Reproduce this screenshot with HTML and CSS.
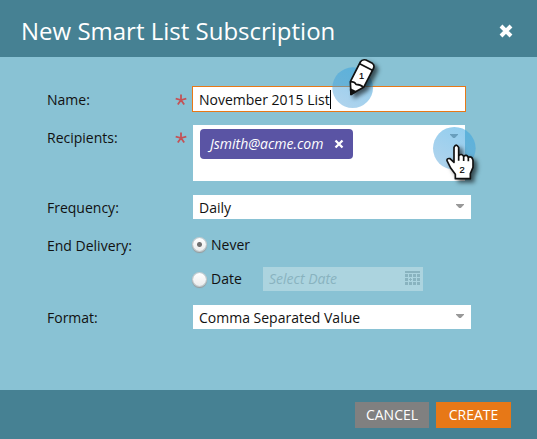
FILE: index.html
```html
<!DOCTYPE html>
<html lang="en">
<head>
<meta charset="utf-8">
<title>New Smart List Subscription</title>
<link rel="stylesheet" href="styles.css">
</head>
<body>
<main class="dialog">
  <header class="header">
    <h1>New Smart List Subscription</h1>
    <svg class="close" viewBox="0 0 14 14"><path d="M2 2 12 12M12 2 2 12"/></svg>
  </header>
  <form class="form">
    <div class="row name">
      <label>Name:</label><svg class="star" viewBox="0 0 12 12"><path d="M6 6V.5M6 6 .7 4.6M6 6l5.3-1.4M6 6 2.8 10.6M6 6l3.2 4.6"/></svg>
      <div class="field text"><span>November 2015 List</span><i class="caret"></i></div>
    </div>
    <div class="row recipients">
      <label>Recipients:</label><svg class="star" viewBox="0 0 12 12"><path d="M6 6V.5M6 6 .7 4.6M6 6l5.3-1.4M6 6 2.8 10.6M6 6l3.2 4.6"/></svg>
      <div class="field multi"><div class="tag"><em>Jsmith@acme.com</em><svg viewBox="0 0 8 8"><path d="m.5 .5 7 7M7.5 .5 .5 7.5"/></svg></div><i class="arrow"></i></div>
    </div>
    <div class="row frequency">
      <label>Frequency:</label><span></span>
      <div class="field select"><span>Daily</span><i class="arrow"></i></div>
    </div>
    <div class="row delivery">
      <label>End Delivery:</label><span></span>
      <div class="options">
        <div class="option never"><i class="radio on"></i><span>Never</span></div>
        <div class="option"><i class="radio"></i><span>Date</span>
          <div class="date"><em>Select Date</em>
            <svg viewBox="0 0 15 14"><path d="M0 0h15v2H0zM0 3h3v3H0zm4 0h3v3H4zm4 0h3v3H8zm4 0h3v3h-3zM0 7h3v3H0zm5 0h1v1h1v1H6v1H5V9H4V8h1zm3 0h3v3H8zm4 0h3v3h-3zM0 11h3v3H0zm4 0h3v3H4zm4 0h3v3H8zm4 0h3v3h-3z"/></svg>
          </div>
        </div>
      </div>
    </div>
    <div class="row format">
      <label>Format:</label><span></span>
      <div class="field select"><span>Comma Separated Value</span><i class="arrow"></i></div>
    </div>
  </form>
  <footer class="footer">
    <button class="cancel">CANCEL</button>
    <button class="create">CREATE</button>
  </footer>
  <svg class="steps" viewBox="0 0 510 420">
    <defs>
      <linearGradient id="spot" x1=".8" y1="0" x2=".3" y2=".9"><stop offset="0" stop-color="#35a5e2" stop-opacity=".55"/><stop offset="1" stop-color="#4c9fd8" stop-opacity=".46"/></linearGradient>
    </defs>
    <circle class="spot" cx="98" cy="113" r="61"/>
    <g class="pointer">
      <path d="M93 133 91 95 121 36Q126 27 138 30L157 40Q164 45 161 54L131 112Z"/>
      <path d="M119 41 157 61M91 95Q104 95 108 103Q121 103 131 112"/>
      <path class="tip" d="M93 134 92 118 107 125Z"/>
    </g>
    <text x="125" y="87">1</text>
    <circle class="spot" cx="403" cy="295" r="64"/>
    <g class="pointer">
      <path d="M406 386V373L392 354 381 332Q380 324 390 326L402 337V292Q408 279 416 292V317Q425 309 431 319Q440 312 445 322Q456 317 459 331V352L451 371V386Z"/>
      <path d="M416 317V332M431 319V333M445 322V334"/>
    </g>
    <text x="426" y="368">2</text>
  </svg>
</main>
</body>
</html>
```
FILE: styles.css
```css
* { box-sizing: border-box; }
body { margin: 0; font: 14px/20px "Open Sans", sans-serif; color: #111; }
.dialog { position: relative; width: 537px; height: 439px; display: flex; flex-direction: column; background: #89c2d4; overflow: hidden; }
.header { height: 57px; flex: none; padding: 4px 24px 0 21px; display: flex; align-items: center; justify-content: space-between; background: #468193; color: #fff; }
h1 { margin: 0; font-size: 24px; line-height: 32px; font-weight: 400; }
.close { width: 14px; height: 14px; fill: none; stroke: #fff; stroke-width: 4; }
.form { flex: 1; padding: 29px 0 0 47px; }
.row { display: grid; grid-template-columns: 127px 19px 278px; align-items: start; }
.row label { padding-top: 3px; }
.name { height: 39px; }
.name label, .delivery label { padding-top: 4px; }
.recipients { height: 70px; }
.frequency { height: 37px; }
.delivery { height: 73px; }
.star { width: 12px; height: 12px; margin: 8px 0 0 1px; fill: none; stroke: #c45256; stroke-width: 1.8; }
.recipients .star { margin-top: 7px; }
.field { display: flex; background: #fff; }
.text { width: 274px; height: 26px; margin-left: -1px; padding: 3px 6px; border: 1px solid #e77817; }
.caret { width: 1px; height: 19px; background: #000; }
.multi { width: 272px; height: 56px; padding: 4px 7px; justify-content: space-between; }
.tag { display: flex; align-items: center; width: 153px; height: 30px; padding: 0 10px; justify-content: space-between; border-radius: 4px; background: #5a54a4; color: #fff; }
.tag svg { width: 8px; height: 8px; overflow: visible; stroke: #fff; stroke-width: 2.3; }
.arrow { width: 8px; height: 4px; background: #999; clip-path: polygon(0 0, 100% 0, 100% 20%, 60% 100%, 40% 100%, 0 20%); }
.multi .arrow { margin-top: 5px; }
.select { height: 24px; padding: 3px 7px 0 6px; justify-content: space-between; }
.select .arrow { margin-top: 6px; }
.option { display: flex; align-items: center; height: 24px; margin-bottom: 11px; }
.never span { padding-top: 2px; }
.radio { width: 13px; height: 13px; margin-right: 5px; border-radius: 50%; background: linear-gradient(#fff, #ececec); box-shadow: 0 0 0 1px #c5cdd0, 0 1px 1px 1px #999; }
.on { background: radial-gradient(circle, #707070 0 2px, transparent 3px), linear-gradient(#fff, #ececec); }
.date { width: 160px; height: 24px; margin-left: auto; margin-right: 48px; padding: 0 3px 0 6px; display: flex; align-items: center; justify-content: space-between; background: #acd4df; color: #89b3bf; }
.date svg { width: 15px; height: 14px; margin-bottom: 3px; fill: #89b3bf; }
.footer { height: 49px; padding: 12px 26px 0 0; display: flex; justify-content: flex-end; gap: 7px; background: #468193; }
button { width: 75px; height: 26px; padding: 0; border: 0; color: #fff; background: #e77817; font: 14px/26px "Open Sans", sans-serif; }
.cancel { width: 74px; background: #808080; }
.steps { position: absolute; left: 320px; top: 50px; width: 170px; height: 140px; overflow: visible; }
.spot { fill: url(#spot); }
.pointer { fill: #fff; stroke: #111; stroke-width: 5; stroke-linejoin: round; filter: drop-shadow(10px 9px 7px #0009); }
.pointer path + path { fill: none; }
.pointer path.tip { fill: #111; }
.steps text { font: 28px "Liberation Sans", sans-serif; fill: #000; stroke: #000; stroke-width: .6; text-anchor: middle; }
```
